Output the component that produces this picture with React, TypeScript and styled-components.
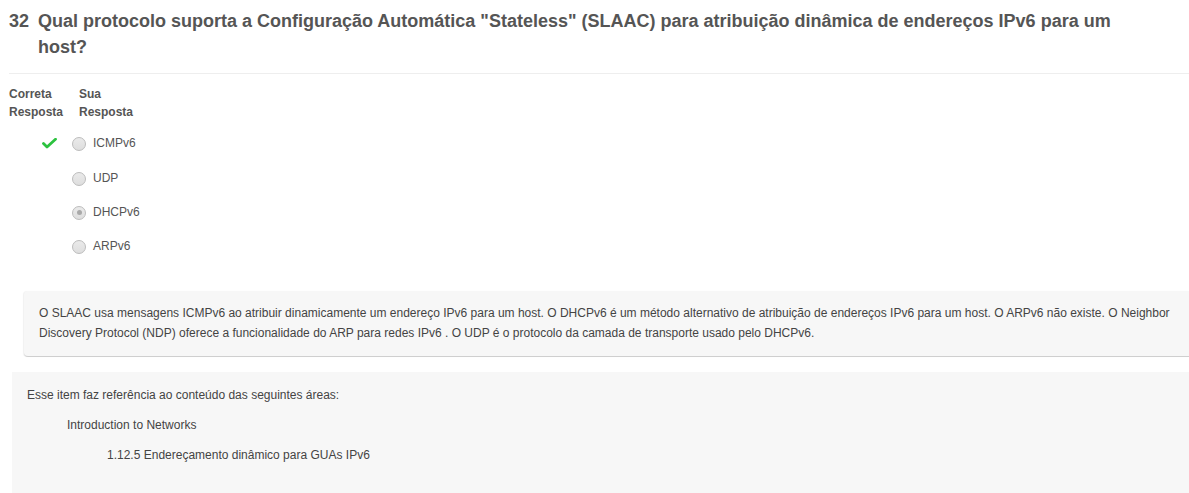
import React from "react";
import styled, { createGlobalStyle } from "styled-components";

const GlobalStyle = createGlobalStyle`
  html, body { margin: 0; padding: 0; background: #fff; }
  body { font-family: "Liberation Sans", Arial, sans-serif; color: #555; overflow: hidden; }
`;

const Page = styled.div`
  width: 1189px;
  display: flex;
  flex-direction: column;
`;

const QuestionHeader = styled.div`
  display: flex;
  padding: 8px 0 0 9px;
  font-size: 18px;
  font-weight: bold;
  line-height: 26px;
  color: #555;
`;

const Number = styled.span`
  width: 29px;
  flex: none;
`;

const Title = styled.h2`
  margin: 0;
  font-size: inherit;
  font-weight: inherit;
  max-width: 1075px;
`;

const Divider = styled.hr`
  margin: 13px 0 0 9px;
  border: none;
  border-top: 1px solid #eee;
  height: 0;
`;

const Answers = styled.div`
  display: grid;
  grid-template-columns: 63px auto;
  padding: 11px 0 0 9px;
  font-size: 12px;
  color: #555;
`;

const HeadCell = styled.div<{ $indent?: number }>`
  font-weight: bold;
  line-height: 18px;
  padding-bottom: 5px;
  padding-left: ${(p) => p.$indent ?? 0}px;
`;

const CorrectCell = styled.div`
  height: 34.4px;
  display: flex;
  align-items: center;
  justify-content: flex-end;
  padding-right: 15px;
`;

const OptionCell = styled.div`
  height: 34.4px;
  display: flex;
  align-items: center;
  gap: 7px;
`;

const Radio = styled.span<{ $checked?: boolean }>`
  width: 12px;
  height: 12px;
  border-radius: 50%;
  border: 1px solid #bcbcbc;
  background: linear-gradient(#eaeaea, #dedede);
  display: inline-flex;
  align-items: center;
  justify-content: center;
  margin-top: 2px;
  &::after {
    content: "";
    width: 5px;
    height: 5px;
    border-radius: 50%;
    background: ${(p) => (p.$checked ? "#a9a9a9" : "transparent")};
  }
`;

const OptionLabel = styled.span`
  line-height: 16px;
`;

const Explanation = styled.div`
  margin: 27px 0 0 24px;
  background: #f7f7f7;
  border-radius: 4px 0 0 4px;
  border-bottom: 1px solid #cfcfcf;
  box-shadow: -1px 0 1px rgba(0, 0, 0, 0.06);
  padding: 12px 10px 13px 15px;
  font-size: 12px;
  line-height: 20px;
  color: #444;
`;

const Reference = styled.div`
  margin: 15px 0 0 12px;
  background: #f7f7f7;
  padding: 8px 15px 30px 15px;
  font-size: 12px;
  line-height: 30px;
  color: #444;
  min-height: 90px;
`;

const RefLine = styled.div<{ $indent: number }>`
  padding-left: ${(p) => p.$indent}px;
`;

const Check = () => (
  <svg width="15" height="11" viewBox="0 0 15 11">
    <path d="M1.5 5.5 L5 9 L13.5 1.2" fill="none" stroke="#2cc23f" strokeWidth="2.8" strokeLinecap="round" strokeLinejoin="round" />
  </svg>
);

const options = [
  { label: "ICMPv6", correct: true, chosen: false },
  { label: "UDP", correct: false, chosen: false },
  { label: "DHCPv6", correct: false, chosen: true },
  { label: "ARPv6", correct: false, chosen: false },
];

export default function App() {
  return (
    <Page>
      <GlobalStyle />
      <QuestionHeader>
        <Number>32</Number>
        <Title>
          Qual protocolo suporta a Configuração Automática "Stateless" (SLAAC) para atribuição dinâmica de endereços IPv6 para um host?
        </Title>
      </QuestionHeader>
      <Divider />
      <Answers>
        <HeadCell>Correta<br />Resposta</HeadCell>
        <HeadCell $indent={7}>Sua<br />Resposta</HeadCell>
        {options.map((o) => (
          <React.Fragment key={o.label}>
            <CorrectCell>{o.correct && <Check />}</CorrectCell>
            <OptionCell>
              <Radio $checked={o.chosen} />
              <OptionLabel>{o.label}</OptionLabel>
            </OptionCell>
          </React.Fragment>
        ))}
      </Answers>
      <Explanation>
        O SLAAC usa mensagens ICMPv6 ao atribuir dinamicamente um endereço IPv6 para um host. O DHCPv6 é um método alternativo de atribuição de endereços IPv6 para um host. O ARPv6 não existe. O Neighbor Discovery Protocol (NDP) oferece a funcionalidade do ARP para redes IPv6 . O UDP é o protocolo da camada de transporte usado pelo DHCPv6.
      </Explanation>
      <Reference>
        <RefLine $indent={0}>Esse item faz referência ao conteúdo das seguintes áreas:</RefLine>
        <RefLine $indent={40}>Introduction to Networks</RefLine>
        <RefLine $indent={80}>1.12.5 Endereçamento dinâmico para GUAs IPv6</RefLine>
      </Reference>
    </Page>
  );
}
